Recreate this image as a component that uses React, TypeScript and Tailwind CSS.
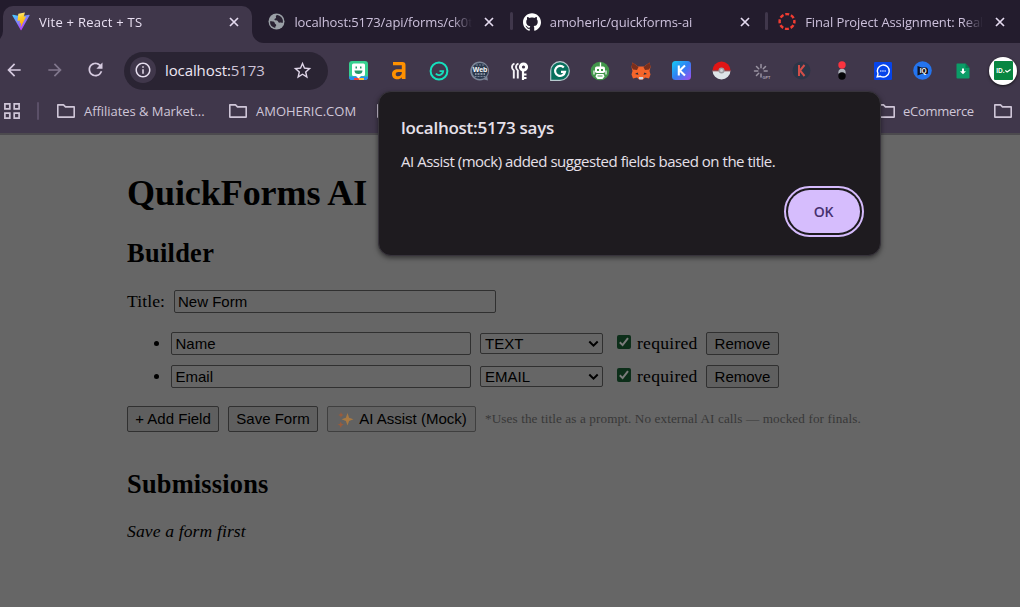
import React from "react";
import { SiGithub } from "react-icons/si";
import {
  MdArrowBack,
  MdArrowForward,
  MdRefresh,
  MdStarBorder,
  MdInfoOutline,
} from "react-icons/md";

const uiFont = "font-['Open_Sans','Noto_Sans',sans-serif]";

function ViteLogo() {
  return (
    <svg width="19" height="19" viewBox="0 0 32 32">
      <defs>
        <linearGradient id="va" x1="0" y1="0" x2="0.6" y2="1">
          <stop offset="0" stopColor="#41d1ff" />
          <stop offset="1" stopColor="#bd34fe" />
        </linearGradient>
        <linearGradient id="vb" x1="0.4" y1="0" x2="0.6" y2="1">
          <stop offset="0" stopColor="#ffea83" />
          <stop offset="0.3" stopColor="#ffd02c" />
          <stop offset="1" stopColor="#ffa800" />
        </linearGradient>
      </defs>
      <path fill="url(#va)" d="M31.2 5.2 16.8 31a.8.8 0 0 1-1.4 0L.7 5.2a.8.8 0 0 1 .8-1.2L16 6.6 30.3 4a.8.8 0 0 1 .9 1.2z" />
      <path fill="url(#vb)" d="M22.5 0 11.5 2.1a.4.4 0 0 0-.3.4L9.9 14.500a.4.4 0 0 0 .5.4l3.500-.7a.4.4 0 0 1 .5.5l-.9 4.300a.4.4 0 0 0 .5.5l1.800-.6a.4.4 0 0 1 .5.5L15.400 25c-.1.400.5.700.7.300l8.700-17.700a.4.4 0 0 0-.4-.6l-3 .6a.4.4 0 0 1-.5-.5l2-6.600a.4.4 0 0 0-.4-.5z" />
    </svg>
  );
}

function GlobeIcon() {
  return (
    <svg width="17" height="17" viewBox="0 0 17 17" className="shrink-0">
      <circle cx="8.500" cy="8.500" r="8" fill="#9aa0a6" />
      <path
        d="M9.500 2c-1.500.3-2 1.300-1.500 2.200.4.800-.6 1.300-1.200 1.600-.8.400-.3 1.300.4 1.500 1.300.2 2.600.2 3 1.400.3 1 1.200 1.100 2 .8.900-.3 1.700.2 2.700.2A6.500 6.500 0 0 0 9.500 2zM2 8.300c1.600 0 3.300-.1 4.200.8.700.8.500 1.700 1.500 2.200.9.500.6 1.600-.2 2.200-.4.400-.3 1.100-.2 1.500A6.600 6.600 0 0 1 2 8.300z"
        fill="#2a2333"
      />
    </svg>
  );
}

function CanvasLogo() {
  return (
    <svg width="19" height="19" viewBox="0 0 19 19" fill="none">
      <circle cx="9.500" cy="9.500" r="7.800" stroke="#f03c32" strokeWidth="2.600" strokeDasharray="4.130 2" strokeDashoffset="2.060" />
    </svg>
  );
}

function CloseIcon() {
  return (
    <svg width="14" height="14" viewBox="0 0 14 14" className="shrink-0">
      <path d="M3 3l8 8M11 3l-8 8" stroke="currentColor" strokeWidth="1.700" />
    </svg>
  );
}

function Folder() {
  return (
    <svg width="20" height="16" viewBox="0 0 20 16" fill="none" className="shrink-0">
      <path d="M1.800 1.900h5.700l2 2h8.700v10.200H1.800z" stroke="#cfc6d8" strokeWidth="1.600" strokeLinejoin="round" />
    </svg>
  );
}

type TabProps = {
  icon: React.ReactNode;
  title: string;
  active?: boolean;
  separator?: boolean;
  spacing: string;
};

function Tab({ icon, title, active, separator, spacing }: TabProps) {
  return (
    <div
      className={
        "relative flex h-[37px] w-[255.4px] shrink-0 items-center pb-[6px] pl-[9px] " +
        (active ? "text-[#e9e0f2]" : "text-[#cdc1dc]")
      }
    >
      {active && (
        <>
          <div className="absolute inset-y-0 left-0 w-[249px] rounded-t-[10px] bg-[#40374b]" />
          <svg className="absolute bottom-0 left-[249px]" width="12" height="12" viewBox="0 0 12 12">
            <path d="M0 0a12 12 0 0 0 12 12H0z" fill="#40374b" />
          </svg>
          <svg className="absolute bottom-0 -left-[12px]" width="12" height="12" viewBox="0 0 12 12">
            <path d="M12 0a12 12 0 0 1-12 12h12z" fill="#40374b" />
          </svg>
        </>
      )}
      {separator && <div className="absolute top-[6px] -left-[4px] h-[18px] w-[3px] rounded-full bg-[#40374b]" />}
      <div className="relative flex w-[18px] shrink-0 items-center justify-center">{icon}</div>
      <div className="relative ml-[9px] w-[178px] shrink-0 overflow-hidden [mask-image:linear-gradient(to_right,black_158px,transparent_178px)]">
        <span className={"block text-[13px] leading-[20px] whitespace-nowrap " + spacing}>{title}</span>
      </div>
      <div className="relative ml-[10px] flex text-[#e4daef]">
        <CloseIcon />
      </div>
    </div>
  );
}

const extensionIcons: React.ReactNode[] = [
  <svg width="19" height="19" viewBox="0 0 19 19">
    <rect width="19" height="19" rx="3" fill="#36d08f" />
    <path d="M0 15.500h19V16a3 3 0 0 1-3 3H3a3 3 0 0 1-3-3z" fill="#2a8df0" />
    <path d="M5 17h5v2H5z" fill="#f5443c" />
    <path d="M10 17h5v2h-5z" fill="#ffc534" />
    <path d="M4.500 2.500h10a1.500 1.500 0 0 1 1.500 1.500v9.500a1.500 1.500 0 0 1-1.500 1.500H12l-2.500 2.500L7 15H4.500A1.500 1.500 0 0 1 3 13.500V4a1.500 1.500 0 0 1 1.500-1.500z" fill="#fff" />
    <path d="M6.500 5.500h1.500v2H6.500zM11 5.500h1.500v2H11zM5.500 9.500h8a4 3.500 0 0 1-8 0z" fill="#26986a" />
  </svg>,
  <svg width="16" height="19" viewBox="0 0 16 19">
    <path
      d="M2 1h9.500a3 3 0 0 1 3 3v14H10.800v-1.700C9.600 17.700 8 18.300 6.300 18.300 3.200 18.300 1 16.300 1 13.300c0-3.300 2.400-5 5.800-5h4V4.300H2zM10.800 11H7.300C5.700 11 4.700 11.800 4.700 13.200c0 1.300.9 2.100 2.300 2.100 2.200 0 3.800-1.500 3.800-3.300z"
      fill="#ff9100"
      fillRule="evenodd"
    />
  </svg>,
  <svg width="20" height="20" viewBox="0 0 20 20" fill="none">
    <circle cx="10" cy="10" r="8.400" stroke="#15e0bd" strokeWidth="2" />
    <path d="M10.500 10.200h3.700a4.300 4.300 0 0 1-7.400 2.500" stroke="#15e0bd" strokeWidth="1.800" />
  </svg>,
  <svg width="20" height="20" viewBox="0 0 20 20">
    <path d="M10 .5a9.500 9.500 0 1 0 4 18l4 1-.8-4A9.500 9.500 0 0 0 10 .5z" fill="#7c8698" />
    <circle cx="10" cy="10" r="8" fill="#2c3a4e" />
    <path d="M6 4l8 0M4.500 15.500h11" stroke="#7a8599" strokeDasharray="2 1" />
    <text x="10" y="11" textAnchor="middle" fontSize="7" fontWeight="700" fill="#fff" fontFamily="Liberation Sans">Web</text>
    <path d="M5 13h10" stroke="#dde3ea" strokeDasharray="1 .5" />
  </svg>,
  <svg width="18" height="18" viewBox="0 0 18 18" fill="none">
    <path d="M3.500 1.500C0 3 .5 7 2.800 8.500v8M7.500 1.500C4 3 4.500 7 6.800 8.500v8" stroke="#f4f2f6" strokeWidth="1.900" />
    <circle cx="12.500" cy="5" r="3.100" stroke="#fff" strokeWidth="3" />
    <path d="M12 9v9M12.500 12.500h3M12.500 16h3" stroke="#fff" strokeWidth="2.200" />
  </svg>,
  <svg width="20" height="20" viewBox="0 0 20 20" fill="none">
    <path d="M10 .7A9.300 9.300 0 1 1 10 19.300H.7V10A9.300 9.300 0 0 1 10 .7z" fill="#08705d" stroke="#b9cbd0" strokeWidth="1.200" />
    <path d="M13.800 6.600A5 5 0 1 0 15 10.800h-4" stroke="#fff" strokeWidth="2.200" />
  </svg>,
  <svg width="20" height="20" viewBox="0 0 20 20">
    <circle cx="10" cy="10" r="9.300" fill="#41964a" />
    <path d="M10.500 1.500v5" stroke="#fff" strokeWidth="1.300" />
    <rect x="5" y="5.500" width="10" height="6.500" rx="1.800" fill="#fff" />
    <path d="M6.500 13h7l1 2.500-2 2.500h-5l-2-2.500z" fill="#fff" />
    <path d="M4 9.500v4M16 9.500v4" stroke="#fff" strokeWidth="1.200" />
    <path d="M7 8h2v2H7zM11 8h2v2h-2zM7.500 14.500h5v1h-5z" fill="#41964a" />
  </svg>,
  <svg width="20" height="18" viewBox="0 0 20 18">
    <path d="M1.500.5L7 4.500h6L18.500.5 19.500 5l-1 4 1 3.500-1.500 4-4-1-2 2H8l-2-2-4 1-1.500-4 1-3.500-1-4z" fill="#f5652a" />
    <path d="M1.500.5L7.500 5 6 8 2 7.500.5 5zM18.500.5L12.500 5 14 8l4-.5 1.500-2.500z" fill="#7a2f1c" />
    <path d="M6.500 10.500l-2.500 1.500 3.500.8zM13.500 10.500l2.500 1.500-3.500.8z" fill="#1f2b3a" />
    <path d="M8 15h4l.3 1.500-.8 1h-3l-.8-1z" fill="#d3d6dc" />
  </svg>,
  <svg width="19" height="19" viewBox="0 0 19 19">
    <defs>
      <linearGradient id="kg" x1="0" y1="0" x2="1" y2="1">
        <stop offset="0" stopColor="#16ccf5" />
        <stop offset=".5" stopColor="#2f80f3" />
        <stop offset="1" stopColor="#a44cf0" />
      </linearGradient>
    </defs>
    <rect width="19" height="19" rx="3.500" fill="url(#kg)" />
    <path d="M6.800 4.500v10M13 4.500L7.800 9.500l5.200 5" stroke="#fff" strokeWidth="2.100" fill="none" />
  </svg>,
  <svg width="19" height="19" viewBox="0 0 19 19">
    <path d="M.5 9.500a9 9 0 0 1 18 0z" fill="#e01515" />
    <path d="M.5 9.500a9 9 0 0 0 18 0z" fill="#dde5e8" />
    <path d="M.5 9.800h18" stroke="#8b2c31" />
    <circle cx="9.500" cy="9.500" r="3" fill="#9c9fa3" />
    <circle cx="9.500" cy="9.500" r="1.500" fill="#cdd1d4" />
  </svg>,
  <svg width="18" height="18" viewBox="0 0 18 18">
    <path d="M8 2.500v3.300M8 12v3M1.500 9h3.300M11.200 9h3M3.500 4.500l2.200 2.200M12.500 4.500l-2.200 2.200M3.500 13.500l2.200-2.200" stroke="#9a94a2" strokeWidth="1.500" strokeLinecap="round" />
    <text x="9.500" y="17" fontSize="3.800" fontWeight="700" fill="#aaa4b1" fontFamily="Liberation Sans">GPT</text>
  </svg>,
  <svg width="19" height="19" viewBox="0 0 19 19">
    <circle cx="9.500" cy="9.500" r="9" fill="#2c3547" />
    <path d="M7 4v11M12.500 4L8 9.500l4.500 5.500" stroke="#d14e49" strokeWidth="2" fill="none" />
  </svg>,
  <svg width="10" height="19" viewBox="0 0 10 19">
    <circle cx="5" cy="11.300" r="3.600" fill="#aeb4bc" />
    <circle cx="5" cy="4" r="3.700" fill="#fb333f" />
    <circle cx="5" cy="15" r="3.700" fill="#050507" />
  </svg>,
  <svg width="18" height="18" viewBox="0 0 18 18" fill="none">
    <rect width="18" height="18" rx="1.200" fill="#0644ea" />
    <path d="M3.200 14.800l.8-3A6 6 0 1 1 6.500 14.300z" stroke="#fff" strokeWidth="1.400" />
    <path d="M6 9h6" stroke="#a9c1ff" strokeWidth="1.500" strokeDasharray="1.500 .7" />
  </svg>,
  <svg width="19" height="19" viewBox="0 0 19 19">
    <circle cx="9.500" cy="9.500" r="9.300" fill="#2474ee" />
    <path d="M4.500 5l4 1.500h5L15 8v4.500L13.500 13h-5l-4 1.500z" fill="#11151f" />
    <text x="10.200" y="12" textAnchor="middle" fontSize="6.500" fontWeight="700" fill="#fff" fontFamily="Liberation Sans">IQ</text>
  </svg>,
  <svg width="14" height="16" viewBox="0 0 14 16">
    <path d="M1 .5h8.500L13.500 5v9.500a1 1 0 0 1-1 1H1.500a1 1 0 0 1-1-1V1z" fill="#0b9c67" />
    <path d="M9.500.5V5h4z" fill="#057c50" />
    <path d="M7 5.500v4" stroke="#fff" strokeWidth="2" />
    <path d="M4 8.300h6L7 11.300z" fill="#fff" />
  </svg>,
  <div className="flex size-[28px] shrink-0 items-center justify-center rounded-full bg-white shadow-sm shadow-black/60">
    <div className="flex size-[19px] items-center justify-center rounded-[1px] bg-[#078641] font-['Liberation_Sans',sans-serif] text-[6.500px] font-bold text-white">
      ID.
      <svg width="6" height="4" viewBox="0 0 6 4">
        <path d="M.3 1.500l1.800 1.500 3.500-2.500" stroke="#fff" strokeWidth="1.300" fill="none" />
      </svg>
    </div>
  </div>,
];

function Toolbar() {
  return (
    <div className="flex h-[55px] items-center">
      <div className="flex w-[124px] shrink-0 items-center pb-[2px] text-[#d5cadf]">
        <MdArrowBack className="ml-[4px] size-[20px]" />
        <MdArrowForward className="ml-[21px] size-[20px] text-[#81778d]" />
        <MdRefresh className="ml-[20px] size-[21px]" />
      </div>
      <div className="flex h-[38px] w-[204px] shrink-0 items-center rounded-full bg-[#2a2433] pb-[1px] pl-[6px]">
        <div className="flex size-[26px] items-center justify-center rounded-full bg-[#40374b] text-[#e6deee]">
          <MdInfoOutline className="size-[18px]" />
        </div>
        <span className="ml-[9px] w-[104px] text-[15px] leading-5 tracking-[-0.1px] whitespace-nowrap text-[#eee7f4]">
          localhost:<span className="text-[#cdc3d7]">5173</span>
        </span>
        <MdStarBorder className="ml-[23px] size-[21px] text-[#e0d6e9]" />
      </div>
      <div className="ml-[10.500px] flex shrink-0">
        {extensionIcons.map((icon, i) => (
          <div key={i} className="flex h-[30px] w-[40.3px] shrink-0 items-center justify-center">
            {icon}
          </div>
        ))}
      </div>
    </div>
  );
}

function BookmarksBar() {
  return (
    <div className="flex h-[35px] items-center justify-between overflow-hidden pb-[9px] text-[13px] leading-5 whitespace-nowrap text-[#cfc6d8]">
      <div className="flex items-center">
        <svg width="16" height="16" viewBox="0 0 16 16" fill="none" className="ml-[4px]">
          <path d="M.9.9h4.900v4.900H.9zM10.200.9h4.900v4.900h-4.900zM.9 10.200h4.900v4.900H.9zM10.200 10.200h4.900v4.900h-4.900z" stroke="#cfc6d8" strokeWidth="1.700" />
        </svg>
        <div className="ml-[17px] mr-[17px] h-[18px] w-[2px] rounded-full bg-[#5b5068]" />
        <Folder />
        <span className="ml-[8px] w-[144px] pb-[1px] tracking-[-0.05px]">Affiliates &amp; Market...</span>
        <Folder />
        <span className="ml-[8px] w-[120px] pb-[1px]">AMOHERIC.COM</span>
        <Folder />
      </div>
      <div className="flex items-center pr-[7px]">
        <Folder />
        <span className="ml-[7px] w-[90px] pb-[1px] tracking-[-0.3px]">eCommerce</span>
        <Folder />
      </div>
    </div>
  );
}

const control = "rounded-[2px] border border-[#303030] font-['Liberation_Sans',sans-serif] text-[15px] text-black";

function FieldRow({ name, type }: { name: string; type: string }) {
  return (
    <li className="flex h-[23px] items-center">
      <span className="ml-[27px] mr-[12px] size-[5px] rounded-full bg-black" />
      <input className={control + " h-[23px] w-[300px] bg-transparent px-[3.500px]"} defaultValue={name} />
      <div className="relative ml-[9px] flex">
        <select className={control + " h-[21px] w-[123px] appearance-none bg-transparent px-[4px] leading-[19px]"} defaultValue={type}>
          <option>{type}</option>
        </select>
        <svg className="absolute top-[7px] right-[4px]" width="11" height="8" viewBox="0 0 11 8">
          <path d="M1.300 1.500l4.200 4.200 4.200-4.200" stroke="#000" strokeWidth="2" fill="none" />
        </svg>
      </div>
      <label className="ml-[14px] flex items-center">
        <svg className="mb-[3px]" width="14" height="14" viewBox="0 0 14 14">
          <rect width="14" height="14" rx="2" fill="#0c2e19" />
          <path d="M2.800 7.300l2.800 2.800 5.400-7" stroke="#7b7b7b" strokeWidth="2" fill="none" />
        </svg>
        <span className="ml-[6px] w-[69px] pb-[2px] text-[17.600px] leading-5 tracking-[0.25px]">required</span>
      </label>
      <button className={control + " h-[23px] w-[73px] bg-[#5f5f5f] text-center leading-[21px]"}>Remove</button>
    </li>
  );
}

function Sparkles() {
  return (
    <svg width="17" height="17" viewBox="0 0 17 17">
      <path d="M10.500 2l1.600 4.700 4.400 1.600-4.400 1.600-1.600 4.700-1.600-4.700-4.400-1.600 4.400-1.600z" fill="#a97942" />
      <path d="M4 1l.8 2.200 2.200.8-2.200.8L4 7l-.8-2.200L1 4l2.200-.8z" fill="#9a5c3c" />
      <path d="M3.800 10.500l.9 2.300 2.300.9-2.300.9-.9 2.300-.9-2.300-2.300-.9 2.300-.9z" fill="#9a5c3c" />
    </svg>
  );
}

function Page() {
  return (
    <main className="flex-1 border-t-2 border-[#4c4a4e] bg-[#666666] pt-[38px] pl-[127px] font-['Liberation_Serif',serif] text-black">
      <h1 className="h-[40px] text-[36px] leading-[40px] font-bold tracking-[-0.06px] whitespace-nowrap">QuickForms AI</h1>
      <h2 className="mt-[25px] h-[30px] text-[26.400px] leading-[30px] font-bold tracking-[0.3px]">Builder</h2>
      <div className="mt-[22px] flex h-[23px] items-center">
        <span className="w-[47px] pb-[2px] text-[17.600px] leading-5 tracking-[0.1px]">Title:</span>
        <input className={control + " h-[23px] w-[322px] bg-transparent px-[3px]"} defaultValue="New Form" />
      </div>
      <ul className="mt-[19px] flex flex-col gap-[10px]">
        <FieldRow name="Name" type="TEXT" />
        <FieldRow name="Email" type="EMAIL" />
      </ul>
      <div className="mt-[18px] flex h-[26px] items-center gap-[9px] whitespace-nowrap">
        <button className={control + " h-[26px] w-[92px] bg-[#5f5f5f] pt-[1px]"}>+ Add Field</button>
        <button className={control + " h-[26px] w-[90px] bg-[#5f5f5f] pt-[1px]"}>Save Form</button>
        <button className="flex h-[26px] w-[149px] items-center justify-center gap-[5px] rounded-[2px] border border-[#3f3f3f] bg-[#626262] pt-[1px] pl-px font-['Liberation_Sans',sans-serif] text-[15px] text-black">
          <Sparkles />
          AI Assist (Mock)
        </button>
        <span className="text-[13.200px] leading-4 tracking-[0.1px] text-[#383838]">
          *Uses the title as a prompt. No external AI calls — mocked for finals.
        </span>
      </div>
      <h2 className="mt-[37px] h-[30px] text-[26.400px] leading-[30px] font-bold tracking-[0.2px]">Submissions</h2>
      <p className="mt-[22px] text-[17.600px] leading-5 tracking-[0.12px] italic">Save a form first</p>
    </main>
  );
}

function AlertDialog() {
  return (
    <div
      role="alertdialog"
      className={
        "absolute top-[91px] left-[378px] flex h-[165px] w-[503px] flex-col rounded-[13px] border border-[#37333b] bg-[#1e1b1f] pt-[24px] pr-[16.500px] pl-[22px] shadow-[0_2px_5px_rgba(0,0,0,0.5)] " +
        uiFont
      }
    >
      <h3 className="text-[17px] leading-6 font-semibold tracking-[-0.25px] whitespace-nowrap text-[#e6e0e9]">localhost:5173 says</h3>
      <p className="mt-[11px] text-[15px] leading-5 tracking-[-0.480px] whitespace-nowrap text-[#e6e0e9]">
        AI Assist (mock) added suggested fields based on the title.
      </p>
      <button className="mt-[15px] flex h-[51px] w-[80px] items-center justify-center self-end rounded-full border-2 border-[#d5bbfc] p-[2px]">
        <span className="flex h-full w-full items-center justify-center rounded-full bg-[#d6bdfd] text-[14px] font-semibold tracking-[-0.3px] text-[#46306f]">OK</span>
      </button>
    </div>
  );
}

export default function App() {
  return (
    <div className="relative flex h-[607px] w-[1020px] flex-col overflow-hidden bg-[#40374b]">
      <header className={"h-[133px] shrink-0 " + uiFont}>
        <div className="flex h-[43px] overflow-hidden bg-[#231c2d] pt-[6px] pl-[3px]">
          <Tab active icon={<ViteLogo />} title="Vite + React + TS" spacing="tracking-[0.25px]" />
          <Tab icon={<GlobeIcon />} title="localhost:5173/api/forms/ck0t" spacing="tracking-[-0.1px]" />
          <Tab separator icon={<SiGithub className="size-[18px] text-white" />} title="amoheric/quickforms-ai" spacing="tracking-[-0.1px]" />
          <Tab separator icon={<CanvasLogo />} title="Final Project Assignment: Real" spacing="tracking-[-0.1px]" />
        </div>
        <Toolbar />
        <BookmarksBar />
      </header>
      <Page />
      <AlertDialog />
    </div>
  );
}
